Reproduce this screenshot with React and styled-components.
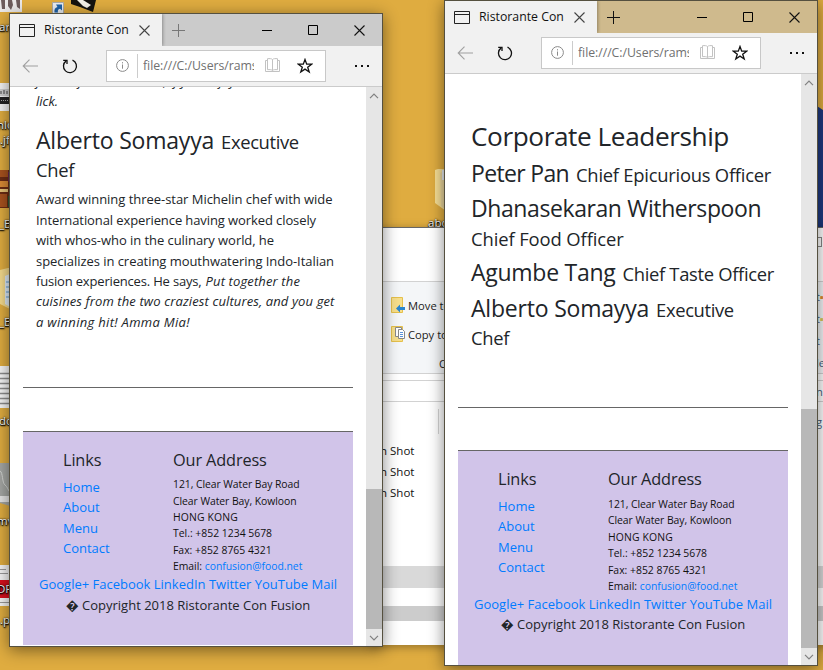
import React from "react";
import styled, { createGlobalStyle } from "styled-components";

const Global = createGlobalStyle`
  * { box-sizing: border-box; }
  body { margin: 0; font-family: "Open Sans", "Noto Sans", sans-serif; }
`;

/* ---------- desktop ---------- */

const Desktop = styled.div`
  position: relative;
  width: 823px;
  height: 670px;
  overflow: hidden;
  background: #dfac40;
`;

const DesktopItem = styled.div`
  position: absolute;
  left: ${(p) => p.$x}px;
  top: ${(p) => p.$y}px;
  svg { display: block; }
`;

const DesktopLabel = styled(DesktopItem)`
  font-size: 11.5px;
  line-height: 16px;
  white-space: nowrap;
  color: #fff;
  text-shadow: 0 0 2px #000, 1px 1px 2px #000, 0 1px 1px #000;
`;

/* ---------- browser window ---------- */

const Window = styled.section`
  position: absolute;
  left: ${(p) => p.$x}px;
  top: ${(p) => p.$y}px;
  width: 374px;
  height: ${(p) => p.$h}px;
  display: flex;
  flex-direction: column;
  border: 1px solid #55503f;
  background: #fff;
  box-shadow: 0 3px 15px rgba(0, 0, 0, 0.48);
`;

const TitleBar = styled.header`
  display: flex;
  flex: none;
  height: 32px;
  background: ${(p) => (p.$active ? "#cfba8d" : "#cbcbcb")};
`;

const Tab = styled.div`
  display: flex;
  align-items: center;
  width: 152px;
  padding: 0 12px 0 9px;
  background: #f1f1f1;
  box-shadow: 1px 0 3px rgba(0, 0, 0, 0.3);
  clip-path: inset(0 -4px 0 0);
`;

const TabTitle = styled.span`
  flex: 1;
  margin-left: 9px;
  font-size: 12.3px;
  line-height: 30px;
  color: #111;
  white-space: nowrap;
`;

const NewTab = styled.div`
  display: flex;
  flex: 1;
  align-items: center;
  padding-left: 10px;
`;

const Caption = styled.div`
  display: flex;
  align-items: center;
  justify-content: center;
  width: 46px;
`;

const Toolbar = styled.nav`
  display: flex;
  flex: none;
  align-items: center;
  height: 41px;
  padding: 0 12px 1px 12px;
  background: #f1f1f1;
  border-bottom: 1px solid #cbcbcb;
`;

const Refresh = styled.div`
  display: flex;
  margin: 0 28px 0 24px;
`;

const AddressBox = styled.div`
  display: flex;
  align-items: center;
  width: 220px;
  height: 32px;
  padding: 0 12px 0 9px;
  background: #fff;
  border: 1px solid #c8c8c8;
`;

const Url = styled.span`
  flex: none;
  width: 118px;
  height: 24px;
  margin-left: 8px;
  padding-left: 5px;
  border-left: 1px solid #cccccc;
  font-size: 12.3px;
  line-height: 23px;
  letter-spacing: -0.05px;
  color: #707070;
  white-space: nowrap;
  overflow: hidden;
`;

const UrlText = styled.span`
  display: block;
  width: 111px;
  overflow: hidden;
`;

const AddressIcons = styled.div`
  display: flex;
  flex: 1;
  align-items: center;
  justify-content: space-between;
  margin-left: 10px;
`;

const More = styled.div`
  display: flex;
  margin-left: auto;
`;

const Viewport = styled.div`
  display: flex;
  flex: 1;
  min-height: 0;
`;

const Page = styled.main`
  display: flex;
  flex: 1;
  flex-direction: column;
  padding: 0 13px;
  overflow: hidden;
  color: #212529;
`;

const Scrollbar = styled.div`
  display: flex;
  flex: none;
  flex-direction: column;
  width: 16px;
  background: #e6e6e6;
`;

const ScrollButton = styled.div`
  display: flex;
  flex: none;
  align-items: center;
  justify-content: center;
  height: 17px;
`;

const Thumb = styled.div`
  flex: 1;
  margin-top: ${(p) => p.$track}px;
  background: #b8b8b8;
`;

/* ---------- page content ---------- */

const Article = styled.div`
  display: flex;
  flex: none;
  flex-direction: column;
  height: ${(p) => p.$h}px;
  padding: 0 13px;
  border-bottom: 1px solid #666;
`;

const Line = styled.div`
  display: flex;
  flex: none;
  align-items: baseline;
  gap: ${(p) => p.$gap || 0}px;
  height: ${(p) => p.$h}px;
  line-height: ${(p) => p.$h}px;
  margin-top: ${(p) => p.$mt || 0}px;
  white-space: nowrap;
`;

const Body = styled.span`
  font-size: 13px;
  font-style: ${(p) => (p.$em ? "italic" : "normal")};
  letter-spacing: ${(p) => p.$ls || 0}px;
`;

const Title = styled.span`
  font-size: 26.2px;
  letter-spacing: -0.42px;
`;

const Name = styled.span`
  font-size: 23px;
  letter-spacing: ${(p) => p.$ls || 0}px;
`;

const Role = styled.span`
  font-size: 18.4px;
  letter-spacing: ${(p) => p.$ls || 0}px;
`;

/* ---------- page footer ---------- */

const Footer = styled.footer`
  display: flex;
  flex: none;
  flex-direction: column;
  height: ${(p) => p.$h}px;
  margin-top: ${(p) => p.$gap}px;
  background: #d1c4e9;
  border-top: 1px solid #666;
`;

const Columns = styled.div`
  display: grid;
  grid-template-columns: 110px 1fr;
  height: ${(p) => p.$h}px;
  padding: 16px 0 0 40px;
`;

const Heading = styled.h5`
  height: 24px;
  margin: 0;
  font-size: 16.3px;
  font-weight: 400;
  line-height: 24px;
  letter-spacing: -0.12px;
`;

const LinkList = styled.ul`
  margin: 5px 0 0;
  padding: 0;
  list-style: none;
`;

const LinkItem = styled.li`
  height: 20.3px;
  font-size: 13px;
  line-height: 20.3px;
  color: #007bff;
`;

const Address = styled.address`
  margin-top: ${(p) => p.$mt}px;
  font-size: 10.4px;
  font-style: normal;
  color: #111;
`;

const AddressLine = styled.div`
  height: 16.4px;
  line-height: 16.4px;
  letter-spacing: ${(p) => p.$ls || 0}px;
  white-space: nowrap;
`;

const Anchor = styled.span`
  color: #007bff;
`;

const Centered = styled.div`
  height: ${(p) => p.$h}px;
  font-size: 13px;
  line-height: 21px;
  text-align: center;
  white-space: nowrap;
  color: ${(p) => (p.$link ? "#007bff" : "#212529")};
`;

/* ---------- file explorer behind ---------- */

const Explorer = styled.section`
  position: absolute;
  left: 370px;
  top: 227px;
  width: 470px;
  height: 418px;
  display: flex;
  flex-direction: column;
  background: #fff;
  border-top: 1px solid #666;
  box-shadow: 0 2px 9px rgba(0, 0, 0, 0.35);
  font-size: 11.2px;
  color: #222;
  white-space: nowrap;
`;

const Strip = styled.div`
  display: flex;
  flex: none;
  justify-content: space-between;
  height: ${(p) => p.$h}px;
  background: ${(p) => p.$bg || "#fff"};
  border-bottom: ${(p) => (p.$line ? "1px solid #d2d2d2" : "0")};
`;

const RibbonGroup = styled.div`
  display: flex;
  flex-direction: column;
  padding: 15px 0 0 21px;
`;

const RibbonAction = styled.div`
  display: flex;
  align-items: center;
  gap: 3px;
  height: 17px;
  margin-bottom: 12px;
  line-height: 16px;
`;

const RibbonCaption = styled.div`
  margin-left: 48px;
  line-height: 16px;
  margin-top: 1px;
`;

const EdgeText = styled.div`
  display: flex;
  flex-direction: column;
  width: 24px;
  padding-top: ${(p) => p.$pt || 0}px;
  line-height: 22px;
  color: #47617e;
`;

const EdgeMark = styled.span`
  color: ${(p) => p.$c};
`;

const MaxGlyph = styled.div`
  width: 10px;
  height: 10px;
  margin: 9px 18px 0 0;
  border: 1px solid #888;
`;

const Files = styled.div`
  display: flex;
  flex: 1;
  flex-direction: column;
  color: #111;
`;

const Divider = styled.div`
  width: 1px;
  height: 25px;
  margin: 7px 0 6px 68px;
  background: #d4d4d4;
`;

const FileName = styled.div`
  height: 21px;
  padding-left: 10px;
  font-size: 11.5px;
  line-height: 21px;
`;

/* ---------- icons ---------- */

const PageIcon = () => (
  <svg width="16" height="13" fill="none" stroke="#222">
    <path d="M.5.5h15v12H.5zM.5 3.5h15" />
  </svg>
);
const Cross = ({ color = "#111" }) => (
  <svg width="11" height="11" fill="none" stroke={color} strokeWidth="1.1">
    <path d="M.5.5l10 10M10.500 .5l-10 10" />
  </svg>
);
const Plus = ({ color }) => (
  <svg width="13" height="13" stroke={color}>
    <path d="M0 6.500h13M6.500 0v13" />
  </svg>
);
const Minimise = () => (
  <svg width="10" height="10" stroke="#000">
    <path d="M0 5.500h10" />
  </svg>
);
const Maximise = () => (
  <svg width="10" height="10" fill="none" stroke="#000">
    <path d="M.5.5h9v9h-9z" />
  </svg>
);
const Back = () => (
  <svg width="16" height="14" fill="none" stroke="#a0a0a0" strokeWidth="1.1">
    <path d="M1.500 7H16M7.500 .7L1.200 7l6.300 6.300" />
  </svg>
);
const Reload = () => (
  <svg width="16" height="16" fill="none" stroke="#111" strokeWidth="1.3">
    <path d="M10.500 2.200A6.500 6.500 0 1 1 4.200 2.900" />
    <path d="M1.200 2.300h3.800v3.800" />
  </svg>
);
const Info = () => (
  <svg width="13" height="13" fill="none" stroke="#8a8a8a">
    <circle cx="6.500" cy="6.500" r="5.900" />
    <path d="M6.500 5.500v4.200M6.500 3.200v1.200" />
  </svg>
);
const Book = () => (
  <svg width="15" height="15" fill="none" stroke="#c2c2c2">
    <path d="M7.500 1.500v11M7.500 1.500C6.500.5 4.500.5 2.500.7v11c2-.2 4-.2 5 .8 1-1 3-1 5-.8v-11c-2-.2-4-.2-5 .8M2.500 2.500h-2v11h14v-11h-2" />
  </svg>
);
const Star = () => (
  <svg width="16" height="16" fill="none" stroke="#111" strokeWidth="1.3">
    <path d="M8 1.500l1.700 4.700h4.900L10.700 9.200l1.500 4.800L8 11.100 3.800 14l1.500-4.800L1.400 6.200h4.900z" />
  </svg>
);
const Dots = () => (
  <svg width="16" height="4" fill="#111">
    <path d="M1 1h2v2H1zM7 1h2v2H7zM13 1h2v2h-2z" />
  </svg>
);
const Chevron = ({ down }) => (
  <svg width="10" height="6" fill="none" stroke="#808080" strokeWidth="1.2">
    <path d={down ? "M1 .8l4 4 4-4" : "M1 5.200l4-4 4 4"} />
  </svg>
);
const MoveIcon = () => (
  <svg width="14" height="17">
    <path d="M.5.5h11v15H.5z" fill="#f7df8c" stroke="#e5c04b" />
    <path d="M5 11.500l4-4v2.500h5v3H9v2.500z" fill="#2a86cf" />
  </svg>
);
const CopyIcon = () => (
  <svg width="14" height="17">
    <path d="M.5.5h11v15H.5z" fill="#f7df8c" stroke="#e5c04b" />
    <path d="M4.500 1.500h6v9h-6z" fill="#fff" stroke="#888" />
    <path d="M7.500 3.500h4l2 2v7h-6z" fill="#fff" stroke="#888" />
    <path d="M9 6.500h3M9 8.500h3M9 10.500h3" stroke="#5b93dc" />
  </svg>
);

/* ---------- composed parts ---------- */

function Browser({ x, y, h, active, track, children }) {
  return (
    <Window $x={x} $y={y} $h={h}>
      <TitleBar $active={active}>
        <Tab>
          <PageIcon />
          <TabTitle>Ristorante Con</TabTitle>
          <Cross color="#444" />
        </Tab>
        <NewTab><Plus color={active ? "#111" : "#777"} /></NewTab>
        <Caption><Minimise /></Caption>
        <Caption><Maximise /></Caption>
        <Caption><Cross /></Caption>
      </TitleBar>
      <Toolbar>
        <Back />
        <Refresh><Reload /></Refresh>
        <AddressBox>
          <Info />
          <Url><UrlText>file:///C:/Users/rams</UrlText></Url>
          <AddressIcons>
            <Book />
            <Star />
          </AddressIcons>
        </AddressBox>
        <More><Dots /></More>
      </Toolbar>
      <Viewport>
        <Page>{children}</Page>
        <Scrollbar>
          <ScrollButton><Chevron /></ScrollButton>
          <Thumb $track={track} />
          <ScrollButton><Chevron down /></ScrollButton>
        </Scrollbar>
      </Viewport>
    </Window>
  );
}

function PageFooter({ h, gap, columns, addressTop, social }) {
  return (
    <Footer $h={h} $gap={gap}>
      <Columns $h={columns}>
        <div>
          <Heading>Links</Heading>
          <LinkList>
            {["Home", "About", "Menu", "Contact"].map((t) => (
              <LinkItem key={t}>{t}</LinkItem>
            ))}
          </LinkList>
        </div>
        <div>
          <Heading>Our Address</Heading>
          <Address $mt={addressTop}>
            <AddressLine $ls={-0.06}>121, Clear Water Bay Road</AddressLine>
            <AddressLine $ls={-0.055}>Clear Water Bay, Kowloon</AddressLine>
            <AddressLine $ls={0.13}>HONG KONG</AddressLine>
            <AddressLine>Tel.: +852 1234 5678</AddressLine>
            <AddressLine>Fax: +852 8765 4321</AddressLine>
            <AddressLine $ls={-0.02}>Email: <Anchor>confusion@food.net</Anchor></AddressLine>
          </Address>
        </div>
      </Columns>
      <Centered $link $h={social}>Google+ Facebook LinkedIn Twitter YouTube Mail</Centered>
      <Centered $h={21}>{"\uFFFD"} Copyright 2018 Ristorante Con Fusion</Centered>
    </Footer>
  );
}

export default function App() {
  return (
    <>
      <Global />
      <Desktop>
        <DesktopItem $x={0} $y={0}>
          <svg width="23" height="13">
            <path d="M0 0h22v12H0z" fill="#eceaea" />
            <path d="M1 0h4v9H2zM8 0h4l1 5-2 5-3-4zM16 0h4v9l-3-2z" fill="#6d5c5c" />
          </svg>
        </DesktopItem>
        <DesktopItem $x={52} $y={0}>
          <svg width="46" height="14">
            <path d="M.5 2.500h11v12H.5z" fill="#e9edf2" stroke="#aaa" />
            <path d="M2.500 12.500c-.5-3 .5-5 3-5.500L4 4.500h6v6L8 8.800c-2 .4-2.500 1.800-2 3.700z" fill="#1f62a8" />
            <path d="M19 0h25l-3 12-13-5-9-3z" fill="#15130f" />
            <path d="M25 0h6l8 5-4 3-4-2z" fill="#f4f1e8" />
          </svg>
        </DesktopItem>
        <DesktopItem $x={0} $y={82}>
          <svg width="10" height="30">
            <path d="M0 1h10v28H0z" fill="#f3f3f3" />
            <path d="M0 7h10v7H0z" fill="#cfcfcf" />
            <path d="M0 15h10v7H0z" fill="#222" />
            <path d="M1 9v3M4 8v4M7 9v3" stroke="#444" />
            <path d="M1 18.500h7" stroke="#aaa" strokeDasharray="1 1" />
          </svg>
        </DesktopItem>
        <DesktopItem $x={0} $y={168}>
          <svg width="10" height="42">
            <path d="M0 2h10v38H0z" fill="#6b2c14" />
            <path d="M0 2h8v7H0zM0 26h7v13H0z" fill="#a8521e" />
            <path d="M0 13h8v6H0z" fill="#d98a35" />
            <path d="M0 21h8v3H0z" fill="#e8c478" />
            <path d="M8 4h2v10H8z" fill="#6c2450" />
            <path d="M8 28h2v11H8z" fill="#2e5a34" />
          </svg>
        </DesktopItem>
        <DesktopItem $x={0} $y={268}>
          <svg width="10" height="42">
            <path d="M0 2l8-2h2v41L0 36z" fill="#f3d98c" />
            <path d="M5 8l5-2v33l-5-3z" fill="#dfeaf3" />
            <path d="M6 14h4M6 19h4M6 24h4M6 29h4" stroke="#5f9bd0" />
          </svg>
        </DesktopItem>
        <DesktopItem $x={0} $y={366}>
          <svg width="10" height="43">
            <path d="M0 0h10v42H0z" fill="#f6f6f6" />
            <path d="M0 7.500h9M0 12.500h9M0 17.500h9M0 22.500h9M0 27.500h9M0 32.500h9M0 37.500h9" stroke="#8c8c8c" strokeWidth="1.500" />
          </svg>
        </DesktopItem>
        <DesktopItem $x={0} $y={463}>
          <svg width="10" height="44">
            <path d="M0 0h10v43L0 40z" fill="#a4a6a3" />
            <path d="M0 8c3 1 2 12 5 14s3 6 5 7" fill="none" stroke="#d2d4d1" />
            <path d="M0 33h10v6H0z" fill="#e4e4e4" />
          </svg>
        </DesktopItem>
        <DesktopItem $x={0} $y={565}>
          <svg width="10" height="42">
            <path d="M0 0h10v41H0z" fill="#f4f4f4" />
            <path d="M0 4.500h6M0 8.500h8M0 37.500h10" stroke="#9a9a9a" />
            <path d="M0 15h10v18H0z" fill="#d9101c" />
          </svg>
        </DesktopItem>
        <DesktopLabel $x={-1} $y={19}>ar</DesktopLabel>
        <DesktopLabel $x={-3} $y={117}>nload</DesktopLabel>
        <DesktopLabel $x={0} $y={132}>.jfif</DesktopLabel>
        <DesktopLabel $x={-1} $y={216}>_E</DesktopLabel>
        <DesktopLabel $x={-1} $y={314}>_E</DesktopLabel>
        <DesktopLabel $x={-1} $y={413}>doc</DesktopLabel>
        <DesktopLabel $x={-3} $y={513}>mv</DesktopLabel>
        <DesktopLabel $x={-3} $y={581}>DF</DesktopLabel>
        <DesktopLabel $x={0} $y={612}>.pd</DesktopLabel>

        <DesktopItem $x={434} $y={169}>
          <svg width="12" height="44">
            <path d="M1 1l3-1h8v42L1 34z" fill="#f6de95" />
            <path d="M6 4l6-3v40l-5-4z" fill="#e8d49a" />
            <path d="M8 1h4v10H8z" fill="#e4e8ec" />
          </svg>
        </DesktopItem>
        <DesktopLabel $x={428} $y={215}>abou</DesktopLabel>
        <DesktopItem $x={806} $y={101}>
          <svg width="17" height="127">
            <path d="M0 0c7 2 12 6 17 9v118H0z" fill="#1f3a80" />
          </svg>
        </DesktopItem>

        <Explorer>
          <Strip $h={54} $line>
            <span />
            <MaxGlyph />
          </Strip>
          <Strip $h={92} $bg="#f4f6f8" $line>
            <RibbonGroup>
              <RibbonAction><MoveIcon />Move to</RibbonAction>
              <RibbonAction><CopyIcon />Copy to</RibbonAction>
              <RibbonCaption>Organize</RibbonCaption>
            </RibbonGroup>
            <EdgeText $pt={4}>
              <span>t<EdgeMark $c="#e08a2c">▪</EdgeMark></span>
              <span>t<EdgeMark $c="#d8c85a">▪</EdgeMark></span>
              <span>t <EdgeMark $c="#8c3030">s</EdgeMark></span>
              <span>lect</span>
            </EdgeText>
          </Strip>
          <Strip $h={7} $line />
          <Strip $h={21} $line>
            <span />
            <EdgeText>n</EdgeText>
          </Strip>
          <Strip $h={164}>
            <Files>
              <Divider />
              <FileName>n Shot</FileName>
              <FileName>n Shot</FileName>
              <FileName>n Shot</FileName>
            </Files>
            <EdgeText $pt={9}>g</EdgeText>
          </Strip>
          <Strip $h={22} $bg="#d9d9d9" />
          <Strip $h={18} />
          <Strip $h={15} $bg="#cccccc" />
        </Explorer>

        <Browser x={9} y={13} h={634} track={385}>
          <Article $h={301}>
            <Line $h={20} $mt={-16}><Body $em>flavors from the world, if you enjoy a</Body></Line>
            <Line $h={20}><Body $em>lick.</Body></Line>
            <Line $h={28} $mt={15} $gap={7}>
              <Name $ls={-0.2}>Alberto Somayya</Name>
              <Role $ls={-0.38}>Executive</Role>
            </Line>
            <Line $h={28} $mt={2}><Role $ls={-0.34}>Chef</Role></Line>
            <Line $h={20.4} $mt={5.4}><Body $ls={-0.035}>Award winning three-star Michelin chef with wide</Body></Line>
            <Line $h={20.4}><Body $ls={-0.096}>International experience having worked closely</Body></Line>
            <Line $h={20.4}><Body $ls={-0.06}>with whos-who in the culinary world, he</Body></Line>
            <Line $h={20.4}><Body $ls={-0.044}>specializes in creating mouthwatering Indo-Italian</Body></Line>
            <Line $h={20.4} $gap={4}>
              <Body $ls={-0.178}>fusion experiences. He says,</Body>
              <Body $em $ls={0.135}>Put together the</Body>
            </Line>
            <Line $h={20.4}><Body $em $ls={0.116}>cuisines from the two craziest cultures, and you get</Body></Line>
            <Line $h={20.4}><Body $em $ls={0.31}>a winning hit! Amma Mia!</Body></Line>
          </Article>
          <PageFooter h={214} gap={43} columns={142} addressTop={4.3} social={21} />
        </Browser>

        <Browser x={444} y={0} h={666} active track={318}>
          <Article $h={334}>
            <Line $h={32} $mt={46}><Title>Corporate Leadership</Title></Line>
            <Line $h={28} $mt={7} $gap={7}>
              <Name $ls={-0.66}>Peter Pan</Name>
              <Role $ls={-0.25}>Chief Epicurious Officer</Role>
            </Line>
            <Line $h={28} $mt={7}><Name $ls={-0.41}>Dhanasekaran Witherspoon</Name></Line>
            <Line $h={28} $mt={3}><Role $ls={-0.1}>Chief Food Officer</Role></Line>
            <Line $h={28} $mt={5} $gap={7}>
              <Name $ls={-0.27}>Agumbe Tang</Name>
              <Role $ls={-0.32}>Chief Taste Officer</Role>
            </Line>
            <Line $h={28} $mt={8} $gap={7}>
              <Name $ls={-0.2}>Alberto Somayya</Name>
              <Role $ls={-0.38}>Executive</Role>
            </Line>
            <Line $h={28} $mt={2}><Role $ls={-0.34}>Chef</Role></Line>
          </Article>
          <PageFooter h={215} gap={42} columns={143} addressTop={5} social={20} />
        </Browser>
      </Desktop>
    </>
  );
}
